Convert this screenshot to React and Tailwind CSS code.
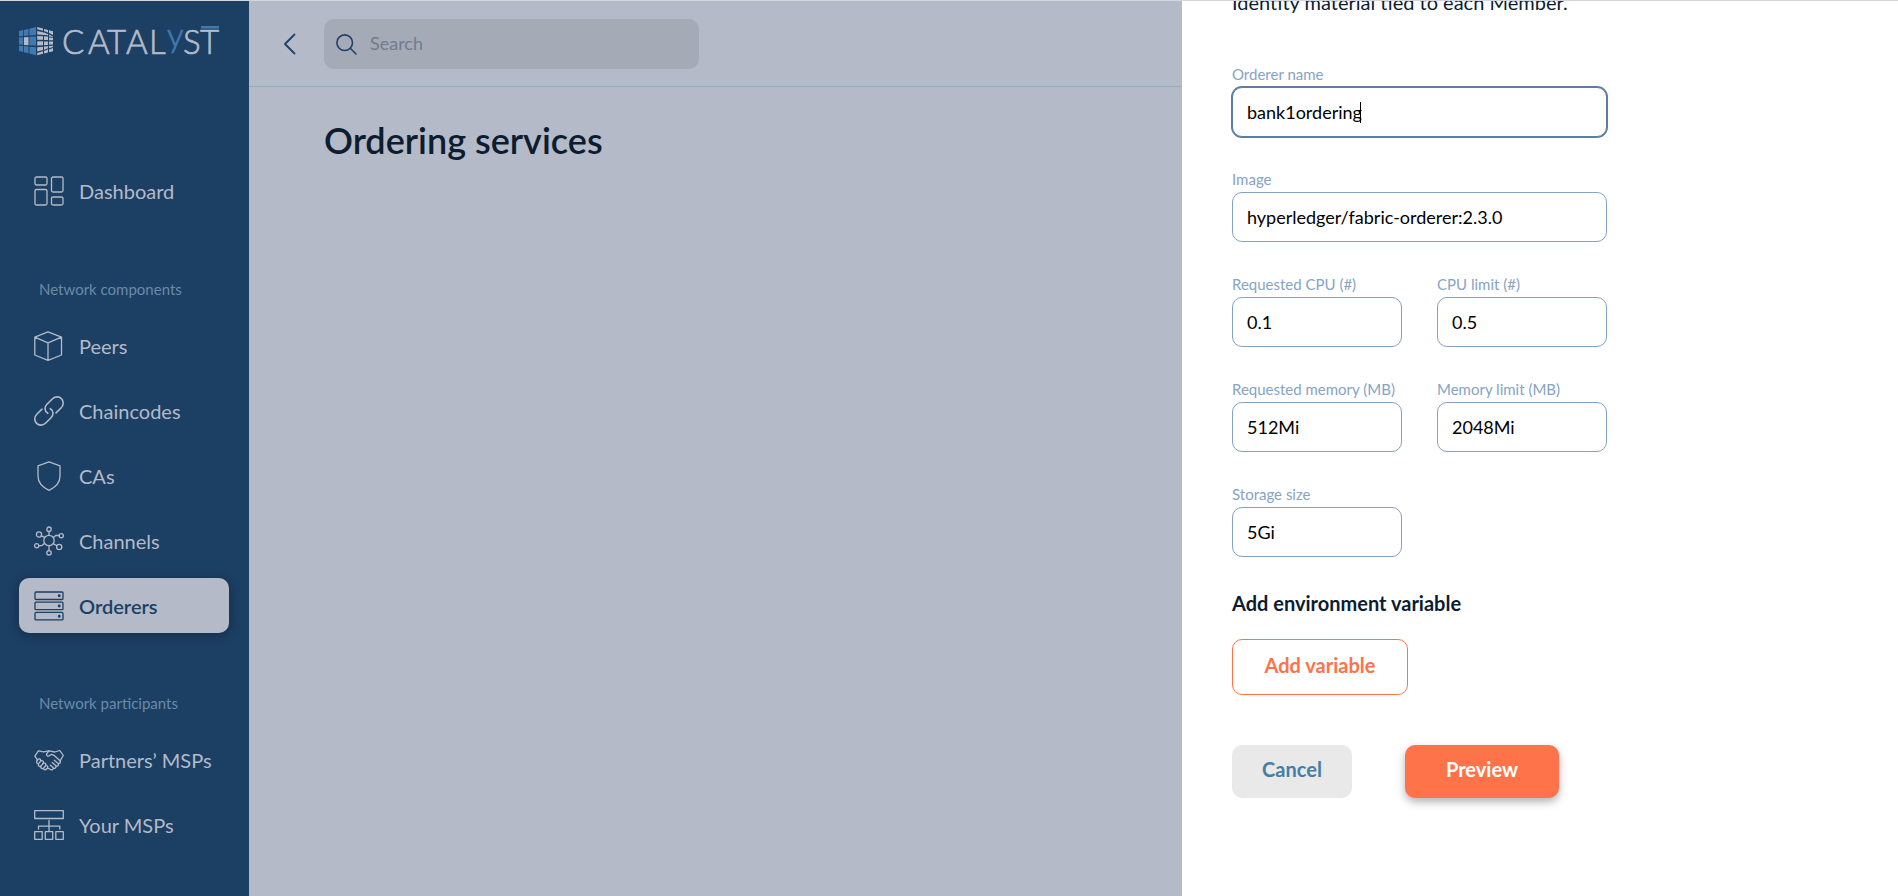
const strokeProps = {
  fill: "none",
  stroke: "currentColor",
  strokeWidth: 1.3,
  strokeLinecap: "round",
  strokeLinejoin: "round",
};

function Icon({ children }) {
  return (
    <svg width="30" height="30" viewBox="0 0 30 30" aria-hidden="true" className="shrink-0" {...strokeProps}>
      {children}
    </svg>
  );
}

const DashboardIcon = () => (
  <Icon>
    <rect x="1" y="1" width="12" height="8" rx="1.5" />
    <rect x="1" y="13.500" width="12" height="15.500" rx="1.5" />
    <rect x="17.500" y="1" width="11.500" height="15" rx="1.5" />
    <rect x="17.500" y="21" width="11.500" height="8" rx="1.5" />
  </Icon>
);

const CubeIcon = () => (
  <Icon>
    <path d="M14 .8 27.500 6.200V24L14 29.300.8 24V6.200ZM.8 6.200 14 11.800 27.500 6.200M14 11.800V29.300" />
  </Icon>
);

const LinkIcon = () => (
  <Icon>
    <path
      strokeWidth="1.6"
      d="M13.800 17.300C10.200 15.200 10.200 11 13 8.200L18 3.200C20.800.3 25 .2 27.400 2.600 29.900 5.100 29.800 9.200 27 12L22 16.800"
    />
    <path
      strokeWidth="1.6"
      d="M16.300 12.700C19.800 14.800 19.800 19 17 21.800L12 26.800C9.200 29.700 5 29.800 2.600 27.400.1 24.900.2 20.800 3 18L8 13.200"
    />
  </Icon>
);

const ShieldIcon = () => (
  <Icon>
    <path d="M15 .8 26 4.800V15C26 22 21 26.500 15 29.300 9 26.500 4 22 4 15V4.800Z" />
  </Icon>
);

const HubIcon = () => (
  <Icon>
    <circle cx="15" cy="14.500" r="5.200" />
    <circle cx="15" cy="3.200" r="2.200" />
    <circle cx="15" cy="26.800" r="2.200" />
    <circle cx="5" cy="8.500" r="2.600" />
    <circle cx="27.300" cy="9.700" r="2.100" />
    <circle cx="2.700" cy="19.700" r="2.100" />
    <circle cx="25.200" cy="21" r="2.600" />
    <path d="M15 5.400V9.300M15 19.700V24.600M7.300 9.800 10.800 11.400M19.400 11.600 22 9.300 25.200 9.500M4.800 19.700 8 19.600 10.600 17.300M19.200 17.600 22.900 19.700" />
  </Icon>
);

const ServersIcon = () => (
  <Icon>
    <rect x="1" y="1" width="28" height="7.500" rx="1" />
    <rect x="1" y="11.200" width="28" height="7.500" rx="1" />
    <rect x="1" y="21.400" width="28" height="7.500" rx="1" />
    <g fill="currentColor">
      <circle cx="25.200" cy="4.700" r=".8" />
      <circle cx="25.200" cy="15" r=".8" />
      <circle cx="25.200" cy="25.200" r=".8" />
    </g>
  </Icon>
);

const HandshakeIcon = () => (
  <Icon>
    <path d="M4.500 5.800 9.500 6.800 14.800 5.800 20.800 7 25.800 5.500 29.300 10.500 26 15.800M4.500 5.800.8 11.200 3.600 15" />
    <path d="M14.800 5.800 12.600 9.200C12.200 11.200 14.600 11.900 16 10.200L17.500 9.300 20 10.300 26 15.800" />
    <path d="M3.400 15.200C4.600 12.900 7.300 13.800 6.400 16.400 8 14.800 10.400 16 9 18.600 10.600 17.300 12.800 18.800 11.500 20.800 13.200 20 14.600 21.600 13.200 23.400" />
    <path d="M3.400 15.200C1.400 17.200 3.500 19.400 5 18.200 3.200 20.500 5.600 22.400 7.200 20.800 5.800 22.800 8.200 24.600 9.800 22.800 9 24.600 11.600 25.800 13.200 23.400M6.400 16.400 5 18.200M9 18.600 7.200 20.800M11.500 20.800 9.800 22.800" />
    <path d="M26 15.800C27.200 17.500 25.500 19.200 23.800 18.200 25.400 20.200 23.300 22 21.600 20.600 22.800 22.600 20.600 24.200 19 22.600 20 24.600 17.500 25.600 15.800 24L13.800 23.400M23.800 18.200 20.300 15.300M21.600 20.600 18.200 17.600M19 22.600 16.400 20.200" />
  </Icon>
);

const OrgIcon = () => (
  <Icon>
    <path d="M.7.7H29.300V8.500H.7ZM15 10.500V21M4.500 19V16.200H25.800V19" />
    <path d="M.7 21.700H8.200V29.300H.7ZM11.300 21.700H18.700V29.300H11.300ZM21.800 21.700H29.300V29.300H21.800Z" />
  </Icon>
);

function Logo() {
  return (
    <svg width="206" height="60" viewBox="0 -14 206 60" role="img" aria-label="Catalyst" className="block">
      <g fill="#417ab0">
        <path d="M0 8 4.200 7.100V13L0 13.400ZM5 6.900 9.500 6V12.500L5 12.900ZM10.400 5.700 17 4.100V11.900L10.400 12.400Z" />
        <path d="M0 14.600 4.200 14.300V21.700L0 21.400ZM10.400 13.800 17 13.400V22.600L10.400 22.200Z" />
        <path d="M0 22.700 4.200 23.100V29L0 28ZM5 23.100 9.500 23.600V30.200L5 29.200ZM10.400 23.700 17 24.300V32.300L10.400 30.500Z" />
      </g>
      <path fill="#b4bac7" d="M5 14.200 9.500 13.900V22.200L5 21.900Z" />
      <g fill="#b4bac7">
        <path d="M18.200 4 24 5.600V7.700L18.200 6.300ZM25 5.900 29 6.900V9.600L25 8ZM30 7.200 34 8.200V11.900L30 10ZM18.200 7.900 24 9.200 29 12H24.500L18.200 11.400ZM25 9.400 29 11.100V12.600L25 11.200ZM30 11.600 34 13.400V14L30 13.500Z" />
        <path d="M18.200 13 24 13.200V16.800H18.200ZM25 13.300 29 13.600V16.900H25ZM30 14.600 34 14.800V17.300H30ZM18.200 18.300H24V22.300L18.200 22.600ZM25 18.400H29V22L25 22.300ZM30 18.600H34V21.500L30 21.800Z" />
        <path d="M18.200 24.200 24 23.700V26.900L18.200 28.400ZM25 23.500 29 23.200V25.200L25 26.800ZM30 23.100 34 22.800V24L30 25.200ZM18.200 30 24 28.200V30.800L18.200 32.300ZM25 28 29 26.300V29.500L25 30.500ZM30 26.400 34 25V28.300L30 29.200Z" />
      </g>
      <g fontFamily="Lato, sans-serif" fontWeight="300" fontSize="33" fill="#b4bac7" stroke="#b4bac7" strokeWidth=".7">
        <text y="31" x="43 69 88 107 130">
          CATAL
        </text>
        <text x="148" y="24" fill="#417ab0" stroke="#417ab0">
          y
        </text>
        <text y="31" x="164 181">
          ST
        </text>
      </g>
      <path fill="#417ab0" d="M182 3H200V5.500H182Z" />
    </svg>
  );
}

function NavItem({ icon: ItemIcon, active, children }) {
  return (
    <a
      href="#"
      aria-current={active ? "page" : undefined}
      className={
        active
          ? "flex h-[55px] items-center gap-[15px] rounded-[10px] bg-[#b4bac7] pl-[15px] text-xl font-semibold text-[#1c3f64] shadow-[0_2px_12px_rgba(0,0,0,0.3)]"
          : "flex h-[55px] items-center gap-[15px] rounded-[10px] pl-[15px] text-xl text-[#b4bac7]"
      }
    >
      <ItemIcon />
      {children}
    </a>
  );
}

function NavSection({ title, children }) {
  return (
    <section>
      <h2 className="pl-5 text-[15px] leading-5 text-[#6a8ba8]">{title}</h2>
      <div className="mt-[19px] flex flex-col gap-[10px]">{children}</div>
    </section>
  );
}

function Field({ id, label, value, focused }) {
  return (
    <div className="flex min-w-0 flex-1 flex-col">
      <label htmlFor={id} className="pb-[3px] text-[15px] leading-5 text-[#86a4c3]">
        {label}
      </label>
      <div className="relative">
        <input
          id={id}
          type="text"
          defaultValue={value}
          autoFocus={focused}
          className="h-[50px] w-full rounded-[10px] border border-[#84a3c2] bg-white px-[14px] text-lg text-black caret-transparent outline-none focus:border-[#5b7fa3] focus:ring-1 focus:ring-[#5b7fa3]"
        />
        {focused && <span aria-hidden="true" className="absolute top-[15px] left-32 h-[21px] w-px bg-black" />}
      </div>
    </div>
  );
}

export default function App() {
  return (
    <div className="flex min-h-screen border-t border-[#d3d6da] bg-[#b4bac7] font-['Lato',sans-serif]">
      <aside className="w-[249px] shrink-0 bg-[#1c3f64] pt-2 pr-5 pl-[19px]">
        <a href="#" className="block">
          <Logo />
        </a>
        <nav className="mt-[94px]">
          <NavItem icon={DashboardIcon}>Dashboard</NavItem>
          <div className="mt-[61px] flex flex-col gap-[60px]">
            <NavSection title="Network components">
              <NavItem icon={CubeIcon}>Peers</NavItem>
              <NavItem icon={LinkIcon}>Chaincodes</NavItem>
              <NavItem icon={ShieldIcon}>CAs</NavItem>
              <NavItem icon={HubIcon}>Channels</NavItem>
              <NavItem icon={ServersIcon} active>
                Orderers
              </NavItem>
            </NavSection>
            <NavSection title="Network participants">
              <NavItem icon={HandshakeIcon}>Partners’ MSPs</NavItem>
              <NavItem icon={OrgIcon}>Your MSPs</NavItem>
            </NavSection>
          </div>
        </nav>
      </aside>

      <main className="min-w-0 flex-1">
        <header className="flex items-center border-b border-[#8faebf] pt-[18px] pb-[17px] pl-[33px]">
          <button type="button" aria-label="Back" className="flex w-[42px] items-center text-[#1f416b]">
            <svg width="14" height="22" viewBox="0 0 14 22" {...strokeProps} strokeWidth="1.8">
              <path d="M12.500 1.500 3 11 12.500 20.500" />
            </svg>
          </button>
          <label className="flex h-[50px] w-[375px] items-center gap-[13px] rounded-[10px] bg-[#a4abb7] pl-3 text-[#1f416b]">
            <svg width="21" height="21" viewBox="0 0 21 21" aria-hidden="true" {...strokeProps} strokeWidth="1.6">
              <circle cx="8.700" cy="8.700" r="7.800" />
              <path d="M14.300 14.300 20 20" />
            </svg>
            <input
              type="search"
              aria-label="Search"
              placeholder="Search"
              className="min-w-0 flex-1 bg-transparent pb-0.5 text-lg outline-none placeholder:text-[#717c8d]"
            />
          </label>
        </header>
        <h1 className="px-[75px] pt-[30px] text-4xl leading-[46px] font-semibold text-[#0c1d30]">Ordering services</h1>
      </main>

      <section aria-label="Create ordering service" className="w-[716px] shrink-0 overflow-hidden bg-white px-[50px]">
        <p className="-mt-[13px] text-xl leading-7 text-[#0c1d30]">Identity material tied to each Member.</p>
        <form className="mt-12 flex w-[375px] flex-col gap-8">
          <Field id="name" label="Orderer name" value="bank1ordering" focused />
          <Field id="image" label="Image" value="hyperledger/fabric-orderer:2.3.0" />
          <div className="flex gap-[35px]">
            <Field id="cpu-request" label="Requested CPU (#)" value="0.1" />
            <Field id="cpu-limit" label="CPU limit (#)" value="0.5" />
          </div>
          <div className="flex gap-[35px]">
            <Field id="memory-request" label="Requested memory (MB)" value="512Mi" />
            <Field id="memory-limit" label="Memory limit (MB)" value="2048Mi" />
          </div>
          <div className="flex w-[170px]">
            <Field id="storage" label="Storage size" value="5Gi" />
          </div>
          <div>
            <h2 className="text-xl leading-7 font-bold text-[#0c1d30]">Add environment variable</h2>
            <button
              type="button"
              className="mt-[22px] h-14 w-44 rounded-[10px] border border-[#ff734a] pb-1 text-xl font-bold text-[#ff734a]"
            >
              Add variable
            </button>
          </div>
          <div className="mt-[18px] flex gap-[53px]">
            <button type="button" className="h-[53px] w-[120px] rounded-[10px] bg-[#e9e9e9] pb-1.5 text-xl font-bold text-[#447ea8]">
              Cancel
            </button>
            <button
              type="submit"
              className="h-[53px] w-[154px] rounded-[10px] bg-[#ff734a] pb-1.5 text-xl font-bold text-white shadow-[0_4px_8px_rgba(0,0,0,0.3)]"
            >
              Preview
            </button>
          </div>
        </form>
      </section>
    </div>
  );
}
